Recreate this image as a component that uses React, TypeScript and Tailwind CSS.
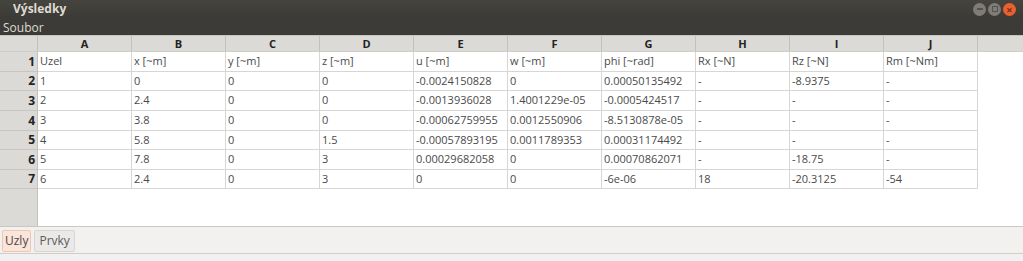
const COLS = ['A', 'B', 'C', 'D', 'E', 'F', 'G', 'H', 'I', 'J'];

const ROWS: string[][] = [
  ['Uzel', 'x [~m]', 'y [~m]', 'z [~m]', 'u [~m]', 'w [~m]', 'phi [~rad]', 'Rx [~N]', 'Rz [~N]', 'Rm [~Nm]'],
  ['1', '0', '0', '0', '-0.0024150828', '0', '0.00050135492', '-', '-8.9375', '-'],
  ['2', '2.4', '0', '0', '-0.0013936028', '1.4001229e-05', '-0.0005424517', '-', '-', '-'],
  ['3', '3.8', '0', '0', '-0.00062759955', '0.0012550906', '-8.5130878e-05', '-', '-', '-'],
  ['4', '5.8', '0', '1.5', '-0.00057893195', '0.0011789353', '0.00031174492', '-', '-', '-'],
  ['5', '7.8', '0', '3', '0.00029682058', '0', '0.00070862071', '-', '-18.75', '-'],
  ['6', '2.4', '0', '3', '0', '0', '-6e-06', '18', '-20.3125', '-54'],
];

const ROW_H = ['h-[20px]', 'h-[19px]', 'h-[20px]', 'h-[20px]', 'h-[19px]', 'h-[20px]', 'h-[19px]'];

function WindowButtons() {
  return (
    <div className="flex items-center gap-[2px] pr-[7px]">
      <span className="flex h-[13px] w-[13px] items-center justify-center rounded-full bg-[#7f7c77]">
        <span className="h-[2px] w-[6px] bg-[#55534e]" />
      </span>
      <span className="flex h-[13px] w-[13px] items-center justify-center rounded-full bg-[#7f7c77]">
        <span className="h-[6px] w-[6px] border border-[#55534e]" />
      </span>
      <span className="flex h-[13px] w-[13px] items-center justify-center rounded-full bg-[#e9612f] text-[11px] leading-none font-bold text-[#7a2e12]">
        ×
      </span>
    </div>
  );
}

export default function App() {
  return (
    <div className="flex h-[261px] w-[1023px] flex-col overflow-hidden bg-[#f2f1f0] font-['Open_Sans',sans-serif] text-[11px]">
      {/* Title bar */}
      <div className="flex h-[18px] items-center justify-between bg-gradient-to-b from-[#45443f] to-[#3b3a36]">
        <span className="pl-[13px] text-[12px] font-bold text-[#dfdbd2]">Výsledky</span>
        <WindowButtons />
      </div>

      {/* Menu bar */}
      <div className="flex h-[17px] items-center bg-[#3c3b37] pl-[3px] pt-[2px] text-[12px] text-[#dfdbd2]">Soubor</div>

      {/* Table */}
      <div className="flex h-[191px] flex-col border-t border-[#c6c4bf] bg-white">
        <div className="flex h-[16px] border-b border-[#cfcdc9] bg-[#dcdad6]">
          <div className="w-[38px] shrink-0 border-r border-[#c3c1bc]" />
          {COLS.map((c) => (
            <div
              key={c}
              className="flex w-[94px] shrink-0 items-center justify-center border-r border-[#c3c1bc] text-[11px] font-bold leading-none text-[#222]"
            >
              {c}
            </div>
          ))}
          <div className="flex-1" />
        </div>
        <div className="flex flex-1">
          <div className="flex w-[38px] shrink-0 flex-col border-r border-[#c3c1bc] bg-[#dcdad6]">
            {ROWS.map((_, i) => (
              <div
                key={i}
                className={`${ROW_H[i]} flex items-center justify-end border-b border-[#c8c6c2] pr-[2px] text-[12px] font-bold text-[#222]`}
              >
                {i + 1}
              </div>
            ))}
          </div>
          <div className="flex flex-col">
            {ROWS.map((row, i) => (
              <div key={i} className={`${ROW_H[i]} flex border-b border-[#d6d6d6]`}>
                {row.map((cell, j) => (
                  <div
                    key={j}
                    className="flex w-[94px] shrink-0 items-center border-r border-[#d6d6d6] pl-[2px] text-[#4a4a4a]"
                  >
                    {cell}
                  </div>
                ))}
              </div>
            ))}
          </div>
        </div>
      </div>

      {/* Tabs */}
      <div className="flex h-[27px] items-center gap-[3px] border-t border-[#cac8c3] pl-[2px] pt-[1px]">
        <div className="flex h-[22px] items-center rounded-[2px] border border-[#ecc7b6] bg-[#fbe4da] px-[2px] text-[12px] text-[#4a4a4a]">
          Uzly
        </div>
        <div className="flex h-[22px] items-center rounded-[2px] border border-[#d8d6d2] bg-[#eae9e7] px-[4px] text-[12px] text-[#5a5a5a]">
          Prvky
        </div>
      </div>
      <div className="flex-1 border-t border-[#d0cec9] bg-[#f2f1f0]" />
    </div>
  );
}
